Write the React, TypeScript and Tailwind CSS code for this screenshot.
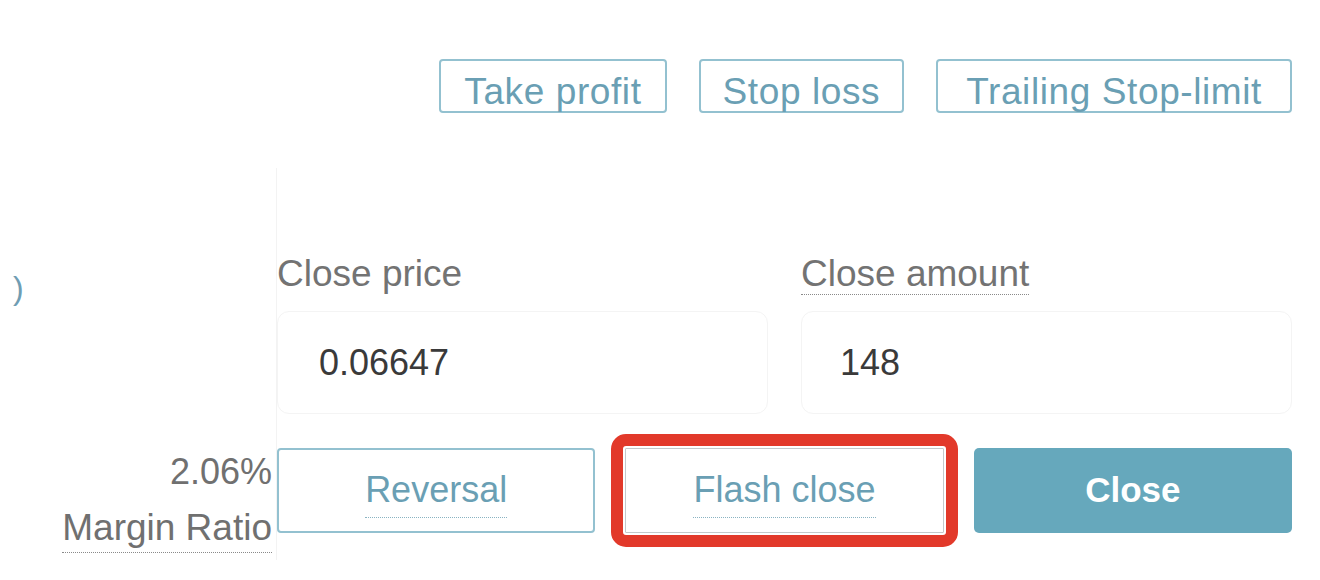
import React from 'react'

const font = { fontFamily: '"Liberation Sans", Arial, sans-serif' }

function OutlineButton({ label, pad }: { label: string; pad: string }) {
  return (
    <button className={`h-[54px] rounded-[4px] border-2 border-[#93c1d0] bg-white ${pad} pt-[11px] text-[37px] leading-[37px] tracking-[0.6px] text-[#6a9fb4]`}>
      {label}
    </button>
  )
}

function Field({ label, value, dotted, valuePad }: { label: string; value: string; dotted?: boolean; valuePad: string }) {
  return (
    <div className="flex flex-col">
      <div className="h-[37px] text-[37px] leading-[37px] text-[#737373]">
        <span className={dotted ? 'border-b border-dotted border-[#8a8a8a]' : ''}>{label}</span>
      </div>
      <div className={`mt-[19px] flex h-[103px] items-center rounded-[12px] border border-[#f4f4f4] ${valuePad} text-[36px] text-[#3a3a3a]`}>
        {value}
      </div>
    </div>
  )
}

export default function App() {
  return (
    <div className="h-[580px] w-[1320px] overflow-hidden bg-white" style={font}>
      <div className="flex justify-end gap-[32px] pr-[28px] pt-[59px]">
        <OutlineButton label="Take profit" pad="px-[23px]" />
        <OutlineButton label="Stop loss" pad="px-[22px]" />
        <OutlineButton label="Trailing Stop-limit" pad="px-[28px]" />
      </div>

      <div className="mt-[55px] flex">
        <div className="flex w-[276px] flex-col">
          <div className="pl-[13px] pt-[104px] text-[32px] leading-[32px] text-[#6f9db3]">)</div>
          <div className="mt-auto flex flex-col items-end pb-[14px] pr-[4px] text-[36px] text-[#707070]">
            <div className="leading-[37px]">2.06%</div>
            <div className="mt-[19px] text-[37px] leading-[37px]">
              <span className="border-b border-dotted border-[#8a8a8a] pb-[4px]">Margin Ratio</span>
            </div>
          </div>
        </div>

        <div className="flex-1 border-l border-[#f3f3f3] pb-[27px] pr-[28px] pt-[87px]">
          <div className="grid grid-cols-2 gap-x-[33px]">
            <Field label="Close price" value="0.06647" valuePad="pl-[41px]" />
            <Field label="Close amount" value="148" dotted valuePad="pl-[38px]" />
          </div>

          <div className="mt-[34px] grid h-[85px] grid-cols-3 gap-[30px]">
            <button className="flex items-center justify-center rounded-[4px] border-2 border-[#93c1d0] bg-white text-[36px] text-[#6a9fb4]">
              <span className="border-b border-dotted border-[#8ab3c2]">Reversal</span>
            </button>
            <button className="flex items-center justify-center rounded-[1px] border border-[#c4c9cb] bg-white text-[36px] text-[#6a9fb4] outline-[12px] outline-offset-[2px] outline-[#e2392a] outline-solid">
              <span className="border-b border-dotted border-[#8ab3c2]">Flash close</span>
            </button>
            <button className="flex items-center justify-center rounded-[5px] bg-[#66a8bc] text-[35px] font-bold text-white">
              Close
            </button>
          </div>
        </div>
      </div>
    </div>
  )
}
